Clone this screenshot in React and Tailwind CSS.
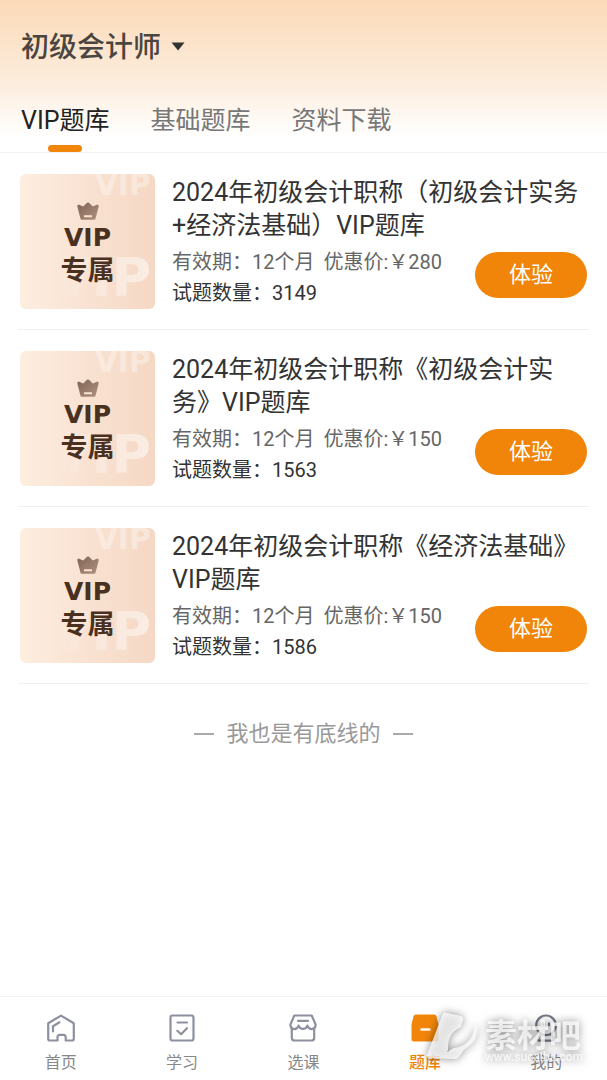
import React, { useState } from "react";

const tabs = ["VIP题库", "基础题库", "资料下载"];

const banks = [
  { title: "2024年初级会计职称（初级会计实务+经济法基础）VIP题库", price: 280, count: 3149 },
  { title: "2024年初级会计职称《初级会计实务》VIP题库", price: 150, count: 1563 },
  { title: "2024年初级会计职称《经济法基础》VIP题库", price: 150, count: 1586 },
];

function Crown() {
  return (
    <svg viewBox="0 0 22 18" className="h-[18px] w-[22px]" aria-hidden="true">
      <defs>
        <linearGradient id="crown" x1="0" y1="0" x2="1" y2="1">
          <stop offset="0" stopColor="#7d6456" />
          <stop offset="1" stopColor="#b3927e" />
        </linearGradient>
      </defs>
      <path
        d="M3.4 16.6.4 4.8Q0 2.600 1.500 2.400l4.700 2L10 .8q1-.8 2 0l3.800 3.600 4.700-2q1.500.2 1.100 2.400l-3 11.800q-.3 1.200-1.500 1.200H4.900q-1.200 0-1.500-1.200z"
        fill="url(#crown)"
      />
      <path d="M7 14.200h8" stroke="#f8e3d4" strokeWidth="2" />
    </svg>
  );
}

function Cover() {
  return (
    <div className="relative flex h-[135px] w-[135px] shrink-0 flex-col items-center overflow-hidden rounded-md bg-linear-to-r from-[#fdeee0] via-[#f9e2d2] to-[#f5d8c4] pt-7 font-['DejaVu_Sans','Noto_Sans_CJK_SC',sans-serif] font-bold text-[#49301f]">
      <span aria-hidden="true" className="absolute -top-1 right-1 text-[30px] leading-[30px] text-white/35">
        VIP
      </span>
      <span aria-hidden="true" className="absolute right-1 bottom-1 bg-linear-to-r from-white/0 to-white/55 bg-clip-text text-[54px] leading-[54px] text-transparent">
        VIP
      </span>
      <Crown />
      <span className="relative mt-1 text-[25px] leading-7">VIP</span>
      <span className="relative mt-[3px] text-[27px] leading-8">专属</span>
    </div>
  );
}

function BankItem({ bank }) {
  return (
    <li className="flex gap-[17px] border-b border-[#efefef] px-0.5 pt-[21px] pb-5">
      <Cover />
      <div className="relative min-w-0 flex-1 pt-0.5">
        <h2 className="text-[25px] leading-[33px] text-[#333]">{bank.title}</h2>
        <p className="mt-[5px] flex gap-[9px] text-xl leading-[31px] text-[#666]">
          <span>有效期：12个月</span>
          <span>优惠价:￥{bank.price}</span>
        </p>
        <p className="text-xl leading-[31px] text-[#333]">试题数量：{bank.count}</p>
        <button
          type="button"
          className="absolute right-0 bottom-[11px] h-[46px] w-28 rounded-full bg-[#f08509] text-[22px] leading-none text-white"
        >
          体验
        </button>
      </div>
    </li>
  );
}

const stroke = {
  fill: "none",
  stroke: "#8d919f",
  strokeWidth: 2.2,
  strokeLinecap: "round",
  strokeLinejoin: "round",
};

function NavIcon({ name }) {
  return (
    <svg viewBox="0 0 30 30" className="h-[30px] w-[30px]" aria-hidden="true">
      {name === "home" && (
        <g {...stroke}>
          <path d="M11.5 27.5H4q-1.8 0-1.8-1.8V10.3L15 2.6l12.8 7.7v15.4q0 1.8-1.8 1.8h-6.3v-3.3q0-2.4-2.4-2.4h-3.4q-2.4 0-2.4 2.4z" />
          <path d="M7 18.5v-5.3l6.5-3.9" />
        </g>
      )}
      {name === "study" && (
        <g {...stroke}>
          <rect x="3.5" y="2.5" width="23" height="25" rx="2" />
          <path d="M10.500 9.5h9.500M10.3 17.8l3.8 3.4 5.9-6" />
        </g>
      )}
      {name === "shop" && (
        <g {...stroke}>
          <path d="M6.3 2.5h17.4l4 9.2q-.3 4.2-4 4.4-3.3-.2-4.3-3.5-1.2 3.3-4.4 3.3t-4.4-3.3q-1 3.3-4.3 3.5-3.7-.2-4-4.4z" />
          <path d="M3.800 15.500v9.200q0 2.8 2.8 2.8h16.800q2.8 0 2.8-2.8V15.500M10 7.8h10" />
        </g>
      )}
      {name === "bank" && (
        <g>
          <path d="M6 1.500h18q2 0 2.500 2l2 8v14.500q0 2.500-2.500 2.500H4q-2.500 0-2.500-2.500V11.500l2-8Q4 1.500 6 1.500z" fill="#f08509" />
          <path d="M10.500 16.500h10" stroke="#fff" strokeWidth="2.400" />
        </g>
      )}
      {name === "mine" && (
        <g {...stroke} stroke="#777b87">
          <circle cx="15" cy="12.300" r="9.800" />
          <path d="M12 10.300v2M18 10.300v2M9.500 21 7.300 26q-.6 1.700 1 1.700h13.400q1.600 0 1-1.700l-2.200-5" />
        </g>
      )}
    </svg>
  );
}

const navItems = [
  { label: "首页", icon: "home" },
  { label: "学习", icon: "study" },
  { label: "选课", icon: "shop" },
  { label: "题库", icon: "bank", active: true },
  { label: "我的", icon: "mine" },
];

function Watermark() {
  return (
    <div className="pointer-events-none absolute top-[14px] right-6 flex items-end gap-2 text-white/75 drop-shadow-[0_0_4px_rgba(0,0,0,0.6)]">
      <svg viewBox="0 0 52 52" className="h-[52px] w-[52px]" aria-hidden="true">
        <path
          d="M17.500 3.500q.8-2.500 3.300-1.800L36 5q2.500.8 2.200 3.300L36 16Q22 22 23 39q-1.500 2 0 2 3-4 9-4.500Q47 34 51.500 12q1 9-1 15.500-4 7-11.500 11l-5 7.500q-1.500 2-4 2L4 47q-3-.3-2-3z"
          fill="currentColor"
        />
      </svg>
      <div>
        <div className="text-[32px] leading-[30px] font-bold">素材吧</div>
        <div className="text-xs leading-3 font-medium">www.sucaiba.com</div>
      </div>
    </div>
  );
}

export default function App() {
  const [active, setActive] = useState(0);
  return (
    <div className="flex min-h-screen flex-col bg-white font-['Roboto','Noto_Sans_CJK_SC',sans-serif]">
      <header className="border-b border-[#f2f2f2] bg-linear-to-b from-[#fbdab8] via-[#fcebd9] via-50% to-white to-90% px-[21px] pt-7">
        <button type="button" className="flex items-center gap-2.5 text-[28px] leading-10 font-medium text-[#4a4540]">
          初级会计师
          <svg viewBox="0 0 14 12" className="h-3 w-[14px]" aria-hidden="true">
            <path d="M.5.500h13L7 8.500z" fill="#333" />
          </svg>
        </button>
        <nav className="mt-[33px] flex gap-[41px]">
          {tabs.map((tab, i) => (
            <button
              key={tab}
              type="button"
              onClick={() => setActive(i)}
              className={
                "flex flex-col items-center text-[25px] leading-10 " +
                (i === active ? "text-[#222]" : "text-[#777]")
              }
            >
              {tab}
              <span className={"mt-1 h-[7px] w-[34px] rounded-full " + (i === active ? "bg-[#f08509]" : "")} />
            </button>
          ))}
        </nav>
      </header>
      <main className="flex-1 px-[18px]">
        <ul>
          {banks.map((bank) => (
            <BankItem key={bank.title} bank={bank} />
          ))}
        </ul>
        <p className="mt-8 flex items-center justify-center gap-3 text-[22px] leading-9 text-[#999]">
          <span className="h-0.5 w-5 bg-[#aaa]" />
          我也是有底线的
          <span className="h-0.5 w-5 bg-[#aaa]" />
        </p>
      </main>
      <footer className="relative border-t border-[#f2f2f2]">
        <nav className="grid grid-cols-5">
          {navItems.map((item) => (
            <a
              key={item.label}
              href="#"
              className={
                "flex flex-col items-center gap-2 pt-4 pb-[5px] text-base leading-6 " +
                (item.active ? "font-medium text-[#f08509]" : "text-[#888]")
              }
            >
              <NavIcon name={item.icon} />
              {item.label}
            </a>
          ))}
        </nav>
        <Watermark />
      </footer>
    </div>
  );
}
